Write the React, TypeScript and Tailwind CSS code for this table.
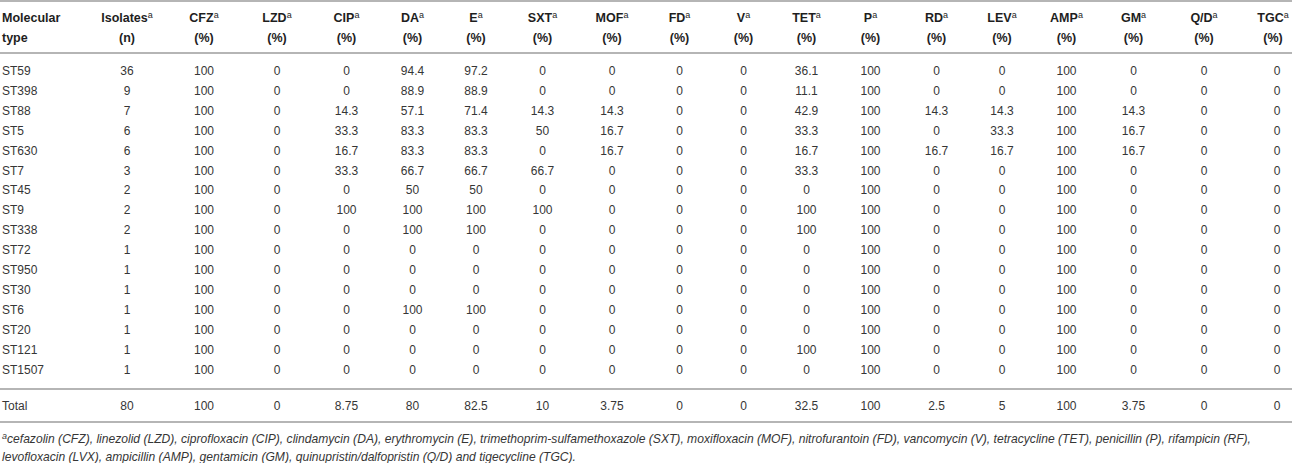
import React from "react";

const cols = ["Isolates", "CFZ", "LZD", "CIP", "DA", "E", "SXT", "MOF", "FD", "V", "TET", "P", "RD", "LEV", "AMP", "GM", "Q/D", "TGC"];

const rows: string[][] = [
  ["ST59", "36", "100", "0", "0", "94.4", "97.2", "0", "0", "0", "0", "36.1", "100", "0", "0", "100", "0", "0", "0"],
  ["ST398", "9", "100", "0", "0", "88.9", "88.9", "0", "0", "0", "0", "11.1", "100", "0", "0", "100", "0", "0", "0"],
  ["ST88", "7", "100", "0", "14.3", "57.1", "71.4", "14.3", "14.3", "0", "0", "42.9", "100", "14.3", "14.3", "100", "14.3", "0", "0"],
  ["ST5", "6", "100", "0", "33.3", "83.3", "83.3", "50", "16.7", "0", "0", "33.3", "100", "0", "33.3", "100", "16.7", "0", "0"],
  ["ST630", "6", "100", "0", "16.7", "83.3", "83.3", "0", "16.7", "0", "0", "16.7", "100", "16.7", "16.7", "100", "16.7", "0", "0"],
  ["ST7", "3", "100", "0", "33.3", "66.7", "66.7", "66.7", "0", "0", "0", "33.3", "100", "0", "0", "100", "0", "0", "0"],
  ["ST45", "2", "100", "0", "0", "50", "50", "0", "0", "0", "0", "0", "100", "0", "0", "100", "0", "0", "0"],
  ["ST9", "2", "100", "0", "100", "100", "100", "100", "0", "0", "0", "100", "100", "0", "0", "100", "0", "0", "0"],
  ["ST338", "2", "100", "0", "0", "100", "100", "0", "0", "0", "0", "100", "100", "0", "0", "100", "0", "0", "0"],
  ["ST72", "1", "100", "0", "0", "0", "0", "0", "0", "0", "0", "0", "100", "0", "0", "100", "0", "0", "0"],
  ["ST950", "1", "100", "0", "0", "0", "0", "0", "0", "0", "0", "0", "100", "0", "0", "100", "0", "0", "0"],
  ["ST30", "1", "100", "0", "0", "0", "0", "0", "0", "0", "0", "0", "100", "0", "0", "100", "0", "0", "0"],
  ["ST6", "1", "100", "0", "0", "100", "100", "0", "0", "0", "0", "0", "100", "0", "0", "100", "0", "0", "0"],
  ["ST20", "1", "100", "0", "0", "0", "0", "0", "0", "0", "0", "0", "100", "0", "0", "100", "0", "0", "0"],
  ["ST121", "1", "100", "0", "0", "0", "0", "0", "0", "0", "0", "100", "100", "0", "0", "100", "0", "0", "0"],
  ["ST1507", "1", "100", "0", "0", "0", "0", "0", "0", "0", "0", "0", "100", "0", "0", "100", "0", "0", "0"],
];

const total = ["Total", "80", "100", "0", "8.75", "80", "82.5", "10", "3.75", "0", "0", "32.5", "100", "2.5", "5", "100", "3.75", "0", "0"];

const grid =
  "grid grid-cols-[88px_78px_76px_70px_69px_63px_64px_69px_70px_65px_63px_63px_65px_67px_64px_65px_69px_72px_1fr]";

function Cell({ v, i }: { v: string; i: number }) {
  if (i === 0) return <div className="pl-[2px] text-left">{v}</div>;
  if (i === 18) return <div className="pl-[22px] text-center">{v}</div>;
  return <div className="text-center">{v}</div>;
}

function Row({ r }: { r: string[] }) {
  return (
    <div className={`${grid} leading-[19.9px]`}>
      {r.map((v, i) => (
        <Cell key={i} v={v} i={i} />
      ))}
    </div>
  );
}

export default function App() {
  return (
    <div
      className="w-[1292px] h-[463px] bg-white text-[12px] text-[#363636] overflow-hidden"
      style={{ fontFamily: '"Liberation Sans", Arial, Helvetica, sans-serif' }}
    >
      <div className={`${grid} border-t-2 border-b-2 border-[#b5b5b5] pt-[6px] pb-[4px] font-bold text-[#1e1e1e] leading-[20px] text-[12.5px]`}>
        <div className="pl-[2px] text-left">
          <div>Molecular</div>
          <div>type</div>
        </div>
        {cols.map((c, i) => (
          <div key={c} className={i === 17 ? "pl-[14px] text-center" : "text-center"}>
            <div>
              {c}
              <span className="relative top-[-4px] font-normal text-[9px] leading-none">a</span>
            </div>
            <div>{i === 0 ? "(n)" : "(%)"}</div>
          </div>
        ))}
      </div>
      <div className="pt-[8px] pb-[7px] border-b-2 border-[#b5b5b5]">
        {rows.map((r) => (
          <Row key={r[0]} r={r} />
        ))}
      </div>
      <div className="pt-[7px] pb-[5px] border-b-2 border-[#b5b5b5]">
        <Row r={total} />
      </div>
      <div className="pt-[7px] pl-[2px] italic leading-[18px] text-[12.1px] text-[#363636] whitespace-nowrap">
        <div>
          <span className="relative top-[-4px] text-[9px] leading-none">a</span>
          cefazolin (CFZ), linezolid (LZD), ciprofloxacin (CIP), clindamycin (DA), erythromycin (E), trimethoprim-sulfamethoxazole (SXT), moxifloxacin (MOF), nitrofurantoin (FD), vancomycin (V), tetracycline (TET), penicillin (P), rifampicin (RF),
        </div>
        <div>
          levofloxacin (LVX), ampicillin (AMP), gentamicin (GM), quinupristin/dalfopristin (Q/D) and tigecycline (TGC).
        </div>
      </div>
    </div>
  );
}
